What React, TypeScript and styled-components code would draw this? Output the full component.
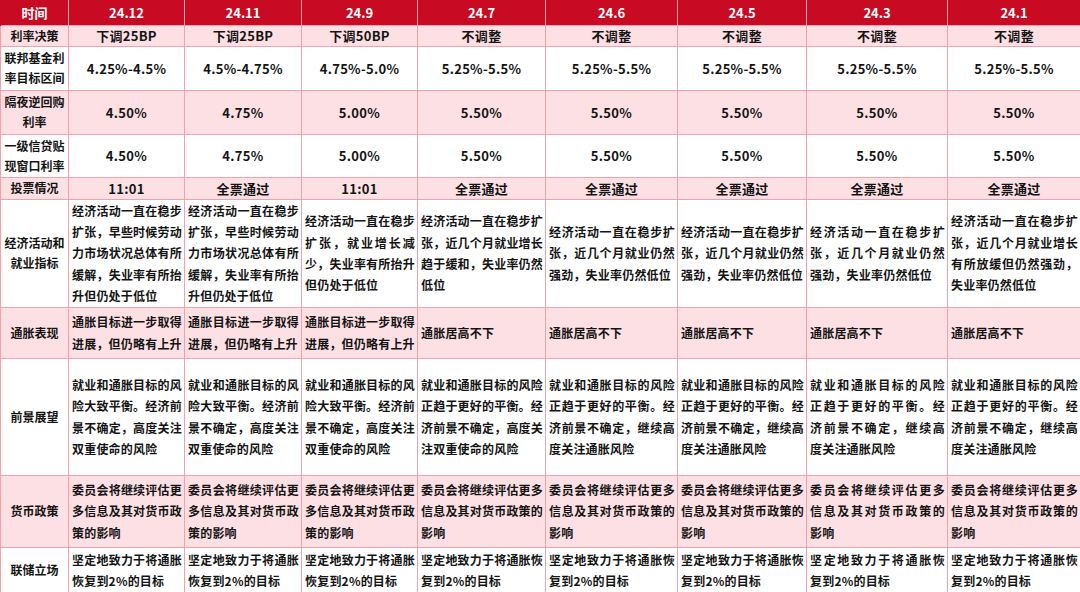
import styled, { createGlobalStyle } from "styled-components";

const GlobalStyle = createGlobalStyle`
  html, body {
    margin: 0;
    padding: 0;
    background: #ffffff;
  }
  body {
    font-family: "Noto Sans CJK SC", "Noto Sans", sans-serif;
    color: #141414;
  }
`;

const color = {
  red: "#c80b22",
  pink: "#fde0e4",
  line: "#f3a2ad",
  white: "#ffffff",
};

const widths = [68, 116, 117, 116, 128, 132, 129, 141, 133];
const heights = [25, 21, 44, 44, 43, 22, 107, 51, 117, 72, 46];

const Tabela = styled.table`
  width: 1080px;
  table-layout: fixed;
  border-collapse: collapse;
`;

const Coluna = styled.col<{ $w: number }>`
  width: ${(p) => p.$w}px;
`;

const Linha = styled.tr<{ $tom: "red" | "pink" | "white"; $h: number }>`
  background: ${(p) => color[p.$tom]};
  height: ${(p) => p.$h}px;
`;

const Cabecalho = styled.th`
  border-left: 1px solid ${color.line};
  border-right: 1px solid ${color.line};
  color: #ffffff;
  font-size: 13px;
  font-weight: 700;
  text-align: center;
  vertical-align: middle;
  padding: 0;
  &:first-child {
    border-left-color: ${color.red};
  }
`;

const Rotulo = styled.td`
  border: 1px solid ${color.line};
  font-size: 12px;
  font-weight: 700;
  line-height: 20px;
  text-align: center;
  vertical-align: middle;
  padding: 0;
`;

const RotuloLinha = styled.span`
  display: block;
  white-space: nowrap;
`;

const Valor = styled.td`
  border: 1px solid ${color.line};
  font-size: 13px;
  font-weight: 700;
  letter-spacing: 0.3px;
  text-align: center;
  vertical-align: middle;
  padding: 0;
  white-space: nowrap;
`;

const Texto = styled.td`
  border: 1px solid ${color.line};
  font-size: 12px;
  font-weight: 700;
  letter-spacing: 0.2px;
  line-height: 21.4px;
  vertical-align: middle;
  padding: 0 2px 0 3px;
`;

const Trecho = styled.span<{ $cheio: boolean }>`
  display: block;
  white-space: nowrap;
  text-align: left;
  text-align-last: ${(p) => (p.$cheio ? "justify" : "left")};
  text-justify: inter-character;
`;

const datas = ["24.12", "24.11", "24.9", "24.7", "24.6", "24.5", "24.3", "24.1"];

const curtos: { rotulo: string[]; valores: string[] }[] = [
  { rotulo: ["利率决策"], valores: ["下调25BP", "下调25BP", "下调50BP", "不调整", "不调整", "不调整", "不调整", "不调整"] },
  { rotulo: ["联邦基金利", "率目标区间"], valores: ["4.25%-4.5%", "4.5%-4.75%", "4.75%-5.0%", "5.25%-5.5%", "5.25%-5.5%", "5.25%-5.5%", "5.25%-5.5%", "5.25%-5.5%"] },
  { rotulo: ["隔夜逆回购", "利率"], valores: ["4.50%", "4.75%", "5.00%", "5.50%", "5.50%", "5.50%", "5.50%", "5.50%"] },
  { rotulo: ["一级信贷贴", "现窗口利率"], valores: ["4.50%", "4.75%", "5.00%", "5.50%", "5.50%", "5.50%", "5.50%", "5.50%"] },
  { rotulo: ["投票情况"], valores: ["11:01", "全票通过", "11:01", "全票通过", "全票通过", "全票通过", "全票通过", "全票通过"] },
];

const emprego1 = ["经济活动一直在稳步", "扩张，早些时候劳动", "力市场状况总体有所", "缓解，失业率有所抬", "升但仍处于低位"];
const emprego2 = ["经济活动一直在稳步扩", "张，近几个月就业仍然", "强劲，失业率仍然低位"];
const inflacao1 = ["通胀目标进一步取得", "进展，但仍略有上升"];
const inflacao2 = ["通胀居高不下"];
const risco1 = ["就业和通胀目标的风", "险大致平衡。经济前", "景不确定，高度关注", "双重使命的风险"];
const risco2 = ["就业和通胀目标的风险", "正趋于更好的平衡。经", "济前景不确定，继续高", "度关注通胀风险"];
const politica1 = ["委员会将继续评估更", "多信息及其对货币政", "策的影响"];
const politica2 = ["委员会将继续评估更多", "信息及其对货币政策的", "影响"];
const postura1 = ["坚定地致力于将通胀", "恢复到2%的目标"];
const postura2 = ["坚定地致力于将通胀恢", "复到2%的目标"];

const longos: { rotulo: string[]; textos: string[][] }[] = [
  {
    rotulo: ["经济活动和", "就业指标"],
    textos: [
      emprego1,
      emprego1,
      ["经济活动一直在稳步", "扩张，就业增长减", "少，失业率有所抬升", "但仍处于低位"],
      ["经济活动一直在稳步扩", "张，近几个月就业增长", "趋于缓和，失业率仍然", "低位"],
      emprego2,
      emprego2,
      emprego2,
      ["经济活动一直在稳步扩", "张，近几个月就业增长", "有所放缓但仍然强劲，", "失业率仍然低位"],
    ],
  },
  {
    rotulo: ["通胀表现"],
    textos: [inflacao1, inflacao1, inflacao1, inflacao2, inflacao2, inflacao2, inflacao2, inflacao2],
  },
  {
    rotulo: ["前景展望"],
    textos: [
      risco1,
      risco1,
      risco1,
      ["就业和通胀目标的风险", "正趋于更好的平衡。经", "济前景不确定，高度关", "注双重使命的风险"],
      risco2,
      risco2,
      risco2,
      risco2,
    ],
  },
  {
    rotulo: ["货币政策"],
    textos: [politica1, politica1, politica1, politica2, politica2, politica2, politica2, politica2],
  },
  {
    rotulo: ["联储立场"],
    textos: [postura1, postura1, postura1, postura2, postura2, postura2, postura2, postura2],
  },
];

const tons: ("pink" | "white")[] = ["pink", "white"];

function Etiqueta({ partes }: { partes: string[] }) {
  return (
    <Rotulo>
      {partes.map((p, i) => (
        <RotuloLinha key={i}>{p}</RotuloLinha>
      ))}
    </Rotulo>
  );
}

export default function App() {
  return (
    <>
      <GlobalStyle />
      <Tabela lang="zh-CN">
        <colgroup>
          {widths.map((w, i) => (
            <Coluna key={i} $w={w} />
          ))}
        </colgroup>
        <thead>
          <Linha $tom="red" $h={heights[0]}>
            <Cabecalho>时间</Cabecalho>
            {datas.map((d) => (
              <Cabecalho key={d}>{d}</Cabecalho>
            ))}
          </Linha>
        </thead>
        <tbody>
          {curtos.map((linha, i) => (
            <Linha key={i} $tom={tons[i % 2]} $h={heights[i + 1]}>
              <Etiqueta partes={linha.rotulo} />
              {linha.valores.map((v, j) => (
                <Valor key={j}>{v}</Valor>
              ))}
            </Linha>
          ))}
          {longos.map((linha, i) => (
            <Linha
              key={i}
              $tom={tons[(i + curtos.length) % 2]}
              $h={heights[i + 1 + curtos.length]}
            >
              <Etiqueta partes={linha.rotulo} />
              {linha.textos.map((t, j) => (
                <Texto key={j}>
                  {t.map((trecho, k) => (
                    <Trecho key={k} $cheio={k < t.length - 1}>
                      {trecho}
                    </Trecho>
                  ))}
                </Texto>
              ))}
            </Linha>
          ))}
        </tbody>
      </Tabela>
    </>
  );
}
